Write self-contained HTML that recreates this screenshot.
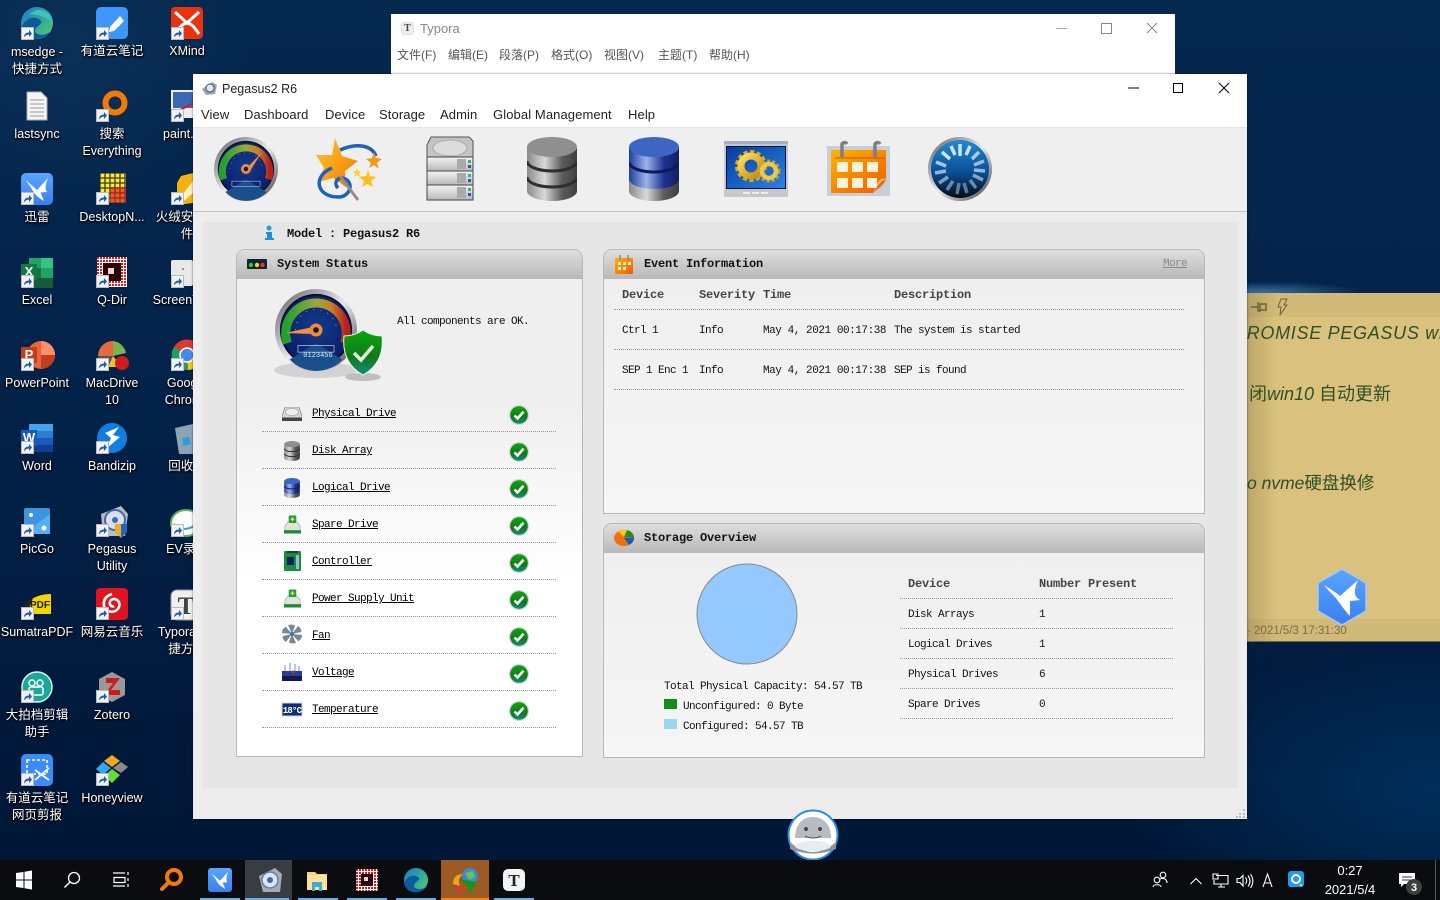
<!DOCTYPE html>
<html><head><meta charset="utf-8"><title>Pegasus2 R6</title>
<style>
*{box-sizing:border-box}
html,body{margin:0;padding:0;width:1440px;height:900px;overflow:hidden}
body{position:relative;background:
 radial-gradient(ellipse 130px 14px at 1265px 292px,rgba(110,180,235,.5),transparent 75%),
 radial-gradient(ellipse 420px 200px at 1440px 790px,rgba(0,70,125,.5),transparent 75%),
 radial-gradient(ellipse 240px 220px at 70px 50px,rgba(25,70,110,.3),transparent 75%),
 linear-gradient(180deg,#05284f 0%,#03234a 40%,#011b3e 75%,#001635 100%);
 font-family:"Liberation Sans","Noto Sans CJK SC",sans-serif}
.a{position:absolute;white-space:nowrap}
.d{position:absolute;width:80px;margin-top:1px;text-align:center;color:#fff;font-size:12.5px;line-height:17px;text-shadow:0 1px 2px #000,1px 1px 2px #000;white-space:nowrap}
svg{position:absolute;left:0;top:0;overflow:visible}
.win{position:absolute;background:#fff}
.m{font-size:13px;color:#222;line-height:16px;letter-spacing:.1px}
.tm{font-size:12px;color:#555;line-height:16px;top:47px}
.mono{font-family:"Liberation Mono","Noto Serif CJK SC",monospace;font-size:11px;letter-spacing:-.6px;line-height:14px;color:#111;transform:translateY(1px)}
.b{font-weight:bold;letter-spacing:-.2px;font-size:12px}
.h{font-weight:bold;color:#444;letter-spacing:-.2px;font-size:12px;transform:none}
.l{text-decoration:underline;color:#000}
.pn{position:absolute;border:1px solid #b8b8b8;border-top-left-radius:9px;border-top-right-radius:9px;background:linear-gradient(180deg,#eeeeee,#f6f6f6)}
.ph{position:absolute;left:0;right:0;top:0;height:29px;background:linear-gradient(180deg,#dedede,#b8b8b8);border-top-left-radius:8px;border-top-right-radius:8px}
.sep{position:absolute;height:1px;border-top:1px dotted #999}
.clk{color:#fff;font-size:13px;text-align:center;width:70px;line-height:16px}
</style></head><body>

<svg width="1440" height="900" viewBox="0 0 1440 900">
<defs>
<linearGradient id="s1" x1="0" y1="0" x2="1" y2="0"><stop offset="0" stop-color="#8a8a8a"/><stop offset=".35" stop-color="#d8d8d8"/><stop offset=".7" stop-color="#5c5c5c"/><stop offset="1" stop-color="#3f3f3f"/></linearGradient>
<linearGradient id="s2" x1="0" y1="0" x2="1" y2="0"><stop offset="0" stop-color="#1f3f9c"/><stop offset=".35" stop-color="#9db3e8"/><stop offset=".7" stop-color="#1d3291"/><stop offset="1" stop-color="#10205e"/></linearGradient>
<radialGradient id="gFace" cx=".5" cy=".45" r=".55"><stop offset="0" stop-color="#123a8d"/><stop offset="1" stop-color="#0a1f66"/></radialGradient>
<linearGradient id="gRim" x1="0" y1="0" x2="1" y2="1"><stop offset="0" stop-color="#5a5a60"/><stop offset=".5" stop-color="#e8e8ee"/><stop offset="1" stop-color="#3c3c44"/></linearGradient>
<linearGradient id="arc" x1="0" y1="0" x2="1" y2="0"><stop offset="0" stop-color="#22a030"/><stop offset=".5" stop-color="#9aa83a"/><stop offset=".75" stop-color="#c9802a"/><stop offset="1" stop-color="#b5201c"/></linearGradient>
<linearGradient id="ok" x1="0" y1="0" x2="0" y2="1"><stop offset="0" stop-color="#0ea60e"/><stop offset=".6" stop-color="#0f7a18"/><stop offset="1" stop-color="#0c8f78"/></linearGradient>
<linearGradient id="dial" x1="0" y1="0" x2="0" y2="1"><stop offset="0" stop-color="#1f8bd0"/><stop offset=".55" stop-color="#0b4f96"/><stop offset="1" stop-color="#020a18"/></linearGradient>
<linearGradient id="cal" x1="0" y1="0" x2="1" y2="1"><stop offset="0" stop-color="#ffb400"/><stop offset="1" stop-color="#f25a00"/></linearGradient>
<linearGradient id="mon" x1="0" y1="0" x2="1" y2="1"><stop offset="0" stop-color="#063c9c"/><stop offset="1" stop-color="#2a82e8"/></linearGradient>
<linearGradient id="edge" x1="0" y1="0" x2="1" y2="1"><stop offset="0" stop-color="#1a7cc8"/><stop offset="1" stop-color="#4fd06e"/></linearGradient>
<linearGradient id="xl" x1="0" y1="0" x2="0" y2="1"><stop offset="0" stop-color="#5aa5ff"/><stop offset="1" stop-color="#3b7ff0"/></linearGradient>
<linearGradient id="gear" x1="0" y1="0" x2="1" y2="1"><stop offset="0" stop-color="#ffe05a"/><stop offset="1" stop-color="#c08a10"/></linearGradient>
<linearGradient id="star" x1="0" y1="0" x2="1" y2="1"><stop offset="0" stop-color="#ffc830"/><stop offset="1" stop-color="#f07800"/></linearGradient>
<linearGradient id="hs" x1="0" y1="0" x2="0" y2="1"><stop offset="0" stop-color="#f4f4f4"/><stop offset="1" stop-color="#b8b8b8"/></linearGradient>
<pattern id="yel" width="5" height="5" patternUnits="userSpaceOnUse"><rect width="5" height="5" fill="#444"/><rect x=".7" y=".7" width="3.6" height="3.6" fill="#ffee22"/></pattern>
<pattern id="redg" width="3" height="3" patternUnits="userSpaceOnUse"><rect width="3" height="3" fill="#fff"/><rect width="2" height="2" fill="#d81c1c"/></pattern>
<symbol id="bdg" viewBox="0 0 13 13" overflow="visible"><rect x=".5" y=".5" width="12" height="12" fill="#f2f2f2" stroke="#bbb"/><path d="M3 10.5 C3 7 5 5.5 8 5.5 L8 3 L11 6.5 L8 10 L8 7.6 C6 7.6 4.5 8.3 3 10.5Z" fill="#1c5cb4"/></symbol>
<symbol id="bird" viewBox="0 0 32 32"><path d="M5 7 C10 12 14 15 16 17 L27 5 C24 12 24 17 26 19 L19.500 19.500 L23 28 C18 25 14 22 12 18 C10 14 7 11 5 7Z" fill="#fff"/></symbol>
<symbol id="gauge" viewBox="0 0 100 100">
<circle cx="50" cy="50" r="50" fill="url(#gRim)"/><circle cx="50" cy="50" r="44" fill="#0b0f30"/><circle cx="50" cy="50" r="41.500" fill="url(#gFace)"/>
<path d="M15 66 A37 37 0 1 1 85 66" fill="none" stroke="url(#arc)" stroke-width="11"/>
<path d="M25 50 A25 25 0 0 1 75 50" fill="none" stroke="#c8d8f0" stroke-width="1" stroke-dasharray="1 8"/>
<path d="M18 86 L50 66 L82 86 A44 44 0 0 1 18 86Z" fill="#1a4f8c"/>
<rect x="28" y="69" width="44" height="8" fill="none" stroke="#c8d8f0" stroke-width=".8"/>
</symbol>
<symbol id="okc" viewBox="0 0 20 20"><circle cx="10" cy="10" r="10" fill="#d4d4d4"/><circle cx="10" cy="10" r="8.800" fill="url(#ok)"/><path d="M5.500 10.500 L8.500 13.500 L14.500 6.800" fill="none" stroke="#fff" stroke-width="2.600"/></symbol>
<symbol id="hdd" viewBox="0 0 20 14"><path d="M3 0 H17 L20 9 V14 H0 V9Z" fill="#d5d5d5" stroke="#777" stroke-width=".6"/><ellipse cx="10" cy="5" rx="6.500" ry="3.500" fill="#eee" stroke="#999" stroke-width=".6"/><rect y="10.500" width="20" height="3.500" fill="#444"/></symbol>
<symbol id="db" viewBox="0 0 50 64"><path d="M0 10 V54 A25 10 0 0 0 50 54 V10Z" fill="url(#s1)"/><ellipse cx="25" cy="10" rx="25" ry="10" fill="#8f8f8f"/><path d="M0 24 A25 10 0 0 0 50 24 M0 40 A25 10 0 0 0 50 40" fill="none" stroke="#2e2e2e" stroke-width="3"/></symbol>
<symbol id="dbb" viewBox="0 0 50 64"><path d="M0 40 V54 A25 10 0 0 0 50 54 V40Z" fill="url(#s1)"/><path d="M0 10 V42 A25 10 0 0 0 50 42 V10Z" fill="url(#s2)"/><ellipse cx="25" cy="10" rx="25" ry="10" fill="#3c66c2"/><path d="M0 25 A25 10 0 0 0 50 25" fill="none" stroke="#0d1a5c" stroke-width="3"/></symbol>
<symbol id="spare" viewBox="0 0 20 20"><path d="M2 12 L5 8 H15 L18 12 V18 H2Z" fill="#e0e4dc" stroke="#7a8" stroke-width=".6"/><rect x="1" y="16.500" width="18" height="3.500" fill="#198a3a"/><rect x="6" y="1" width="8" height="8" rx="1" fill="#1e9c46"/><path d="M10 3 V7 M8 5 H12" stroke="#ffe94a" stroke-width="1.400"/></symbol>
</defs>

<!-- desktop icons -->
<g transform="translate(21,7)"><circle cx="16" cy="16" r="16" fill="url(#edge)"/><path d="M1 20 C4 10 16 8 20 14 C22 18 14 19 14 24 C14 28 24 30 30 24 C26 32 12 34 6 29 C3 27 1.500 24 1 20Z" fill="#0e5a9f"/><path d="M8 8 C16 -1 30 3 32 16 C27 10 14 6 8 8Z" fill="#3fc5b8"/></g>
<g transform="translate(96,7)"><rect width="32" height="32" rx="5" fill="#3d97fb"/><path d="M14 20 L24 9 L28 14 L18 24 L13 25Z" fill="#fff"/></g>
<g transform="translate(171,7)"><rect width="32" height="32" rx="4" fill="#e8330e"/><path d="M4 5 L16 16 L28 5 M4 27 C10 18 12 17 16 16 C20 17 22 18 28 27" fill="none" stroke="#fff" stroke-width="3"/></g>
<g transform="translate(26,92)"><path d="M1 0 H15 L21 6 V28 H1Z" fill="#f5f5f5" stroke="#aaa"/><path d="M4 8 H18 M4 12 H18 M4 16 H18 M4 20 H18 M4 24 H18" stroke="#999"/></g>
<g transform="translate(103,91)"><circle cx="12" cy="12" r="9.500" fill="none" stroke="#f27a05" stroke-width="6"/></g>
<g transform="translate(171,90)"><rect width="22" height="28" fill="#eee"/><rect x="2" y="2" width="22" height="16" fill="#3968b4"/><path d="M2 24 L24 12" stroke="#c22" stroke-width="2"/></g>
<g transform="translate(21,173)"><rect width="32" height="32" rx="5" fill="url(#xl)"/><use href="#bird" width="32" height="32"/></g>
<g transform="translate(100,173)"><rect width="26" height="30" fill="url(#yel)"/><rect x="10" y="14" width="16" height="16" fill="#d41818" opacity=".65"/></g>
<g transform="translate(173,173)"><path d="M8 3 L20 0 V30 L4 32 V10Z" fill="#f5b20e"/><path d="M9 22 L20 8 V20 L11 28Z" fill="#fff3c4"/></g>
<g transform="translate(21,258)"><rect x="8" width="24" height="30" fill="#1d7044"/><rect x="20" width="12" height="10" fill="#33c481"/><rect x="20" y="10" width="12" height="10" fill="#21a366"/><rect x="8" width="12" height="10" fill="#21a366"/><rect x="8" y="20" width="24" height="10" fill="#185c37"/><rect y="6" width="16" height="16" fill="#107c41"/><text x="8" y="18" font-size="13" font-weight="bold" fill="#fff" text-anchor="middle" font-family="Liberation Sans,sans-serif">X</text></g>
<g transform="translate(97,257)"><rect width="30" height="30" fill="url(#redg)"/><rect x="6" y="6" width="18" height="18" fill="#2a0505"/><rect x="11" y="11" width="6" height="6" fill="#f2d0d0"/></g>
<g transform="translate(171,260)"><rect width="22" height="26" rx="2" fill="#e8e8e8"/><circle cx="12" cy="9" r="1" fill="#777"/></g>
<g transform="translate(21,341)"><circle cx="20" cy="14" r="14" fill="#e8643c"/><path d="M20 0 A14 14 0 0 1 34 14 H20Z" fill="#ff8f6b"/><path d="M20 14 H34 A14 14 0 0 1 20 28Z" fill="#c43e1c"/><rect y="6" width="16" height="16" fill="#c43e1c"/><text x="8" y="18" font-size="13" font-weight="bold" fill="#fff" text-anchor="middle" font-family="Liberation Sans,sans-serif">P</text></g>
<g transform="translate(98,341)"><path d="M0 15 A15 15 0 0 1 15 0 L15 15Z" fill="#e36a42"/><path d="M15 0 A15 15 0 0 1 28 12 L15 15Z" fill="#7fb34a"/><path d="M0 15 H15 L10 28 A15 15 0 0 1 0 15Z" fill="#555"/><path d="M15 15 L24 26 H10Z" fill="#f0c030"/><circle cx="24" cy="22" r="7" fill="#d01c1c"/></g>
<g transform="translate(172,340)"><circle cx="15" cy="15" r="15" fill="#e23b2e"/><path d="M15 15 L2 7 A15 15 0 0 1 28 7Z" fill="#d83b2e"/><path d="M15 15 L28 7 A15 15 0 0 1 16 30Z" fill="#f5c518"/><path d="M15 15 L16 30 A15 15 0 0 1 2 7Z" fill="#1fa05a"/><circle cx="15" cy="15" r="7" fill="#4a86e8" stroke="#fff" stroke-width="1.500"/></g>
<g transform="translate(21,424)"><rect x="8" width="24" height="28" fill="#2b7cd3"/><rect x="8" width="24" height="7" fill="#41a5ee"/><rect x="8" y="14" width="24" height="7" fill="#185abd"/><rect x="8" y="21" width="24" height="7" fill="#103f91"/><rect y="6" width="16" height="16" fill="#185abd"/><text x="8" y="18" font-size="13" font-weight="bold" fill="#fff" text-anchor="middle" font-family="Liberation Sans,sans-serif">W</text></g>
<g transform="translate(97,423)"><circle cx="15" cy="15" r="15" fill="#0f7ee0"/><path d="M8 10 L22 4 L16 12 L23 14 L9 26 L14 15Z" fill="#fff"/></g>
<g transform="translate(174,424)"><path d="M1 4 L19 0 L22 4 L19 30 H5Z" fill="#8ea3b5"/><path d="M8 14 L15 13 L17 20 L9 22Z" fill="#28a0e0"/></g>
<g transform="translate(24,508)"><rect width="26" height="26" rx="2" fill="#3f94e0"/><path d="M0 26 L26 6 V26Z" fill="#56b0f0"/><circle cx="7" cy="7" r="2" fill="#fff"/><circle cx="20" cy="20" r="2.500" fill="#fff"/></g>
<g transform="translate(97,506)"><path d="M4 8 L24 0 L31 8 L28 30 L6 30Z" fill="#b9bcc1"/><circle cx="18" cy="14" r="10" fill="#dde" stroke="#3a6bb0" stroke-width="2"/><circle cx="18" cy="14" r="3" fill="#3a6bb0"/><path d="M18 18 L30 18 L30 26 L24 32 L18 26Z" fill="#f5a91c"/><path d="M24 18 H30 V26 L24 32Z" fill="#2166c4"/></g>
<g transform="translate(171,507)"><ellipse cx="15" cy="16" rx="15" ry="13" fill="#fff" stroke="#56b45e" stroke-width="2"/><path d="M3 17 C10 24 20 24 28 14" fill="none" stroke="#2ea6e0" stroke-width="2"/></g>
<g transform="translate(23,594)"><path d="M2 14 C4 4 18 0 28 0 V20 H8Z" fill="#f6d400"/><path d="M2 14 C3 8 6 5 10 4 L4 20Z" fill="#222"/><text x="17" y="14" font-size="10" font-weight="bold" fill="#222" text-anchor="middle" font-family="Liberation Sans,sans-serif">PDF</text></g>
<g transform="translate(96,588)"><rect width="32" height="32" rx="4" fill="#e0141f"/><path d="M16 6 C10 8 7 12 8 18 C10 25 20 26 23 19 C25 13 19 9 15 12 C12 15 15 20 18 18" fill="none" stroke="#fff" stroke-width="2.600"/></g>
<g transform="translate(171,590)"><rect width="28" height="30" rx="6" fill="#f0f0f0" stroke="#999"/><text x="15" y="24" font-family="Liberation Serif,serif" font-size="25" font-weight="bold" fill="#444" text-anchor="middle">T</text></g>
<g transform="translate(22,672)"><circle cx="15" cy="15" r="15" fill="#18a999" stroke="#dff5f2" stroke-width="1.500"/><circle cx="10" cy="11" r="3" fill="none" stroke="#fff" stroke-width="1.500"/><circle cx="18" cy="11" r="3" fill="none" stroke="#fff" stroke-width="1.500"/><rect x="7" y="15" width="14" height="8" rx="2" fill="none" stroke="#fff" stroke-width="1.500"/></g>
<g transform="translate(99,672)"><path d="M13 0 L26 7 V23 L13 30 L0 23 V7Z" fill="#999"/><path d="M7 6 H21 L12 18 H21 V23 H5 L14 11 H7Z" fill="#cb1b1b"/></g>
<g transform="translate(21,754)"><rect width="32" height="32" rx="5" fill="#3b8cfb"/><rect x="6" y="6" width="20" height="14" fill="none" stroke="#fff" stroke-dasharray="3 2" stroke-width="1.600"/><path d="M14 26 L28 14 M14 16 L28 26" stroke="#fff" stroke-width="1.800"/></g>
<g transform="translate(96,755)"><path d="M16 0 L24 6 L16 12 L8 6Z" fill="#f5a623"/><path d="M25 7 L32 12 L25 18 L17 13Z" fill="#8c8c8c"/><path d="M7 7 L15 13 L7 20 L0 14Z" fill="#2fa8f5"/><path d="M16 14 L24 20 L16 28 L8 21Z" fill="#66dd33"/></g>
<use href="#bdg" x="21" y="27" width="13" height="13"/><use href="#bdg" x="96" y="27" width="13" height="13"/><use href="#bdg" x="171" y="27" width="13" height="13"/>
<use href="#bdg" x="96" y="109" width="13" height="13"/><use href="#bdg" x="171" y="109" width="13" height="13"/>
<use href="#bdg" x="21" y="192" width="13" height="13"/><use href="#bdg" x="96" y="192" width="13" height="13"/><use href="#bdg" x="171" y="192" width="13" height="13"/>
<use href="#bdg" x="21" y="275" width="13" height="13"/><use href="#bdg" x="96" y="275" width="13" height="13"/><use href="#bdg" x="171" y="275" width="13" height="13"/>
<use href="#bdg" x="21" y="358" width="13" height="13"/><use href="#bdg" x="96" y="358" width="13" height="13"/><use href="#bdg" x="171" y="358" width="13" height="13"/>
<use href="#bdg" x="21" y="441" width="13" height="13"/><use href="#bdg" x="96" y="441" width="13" height="13"/>
<use href="#bdg" x="21" y="524" width="13" height="13"/><use href="#bdg" x="96" y="524" width="13" height="13"/><use href="#bdg" x="171" y="524" width="13" height="13"/>
<use href="#bdg" x="21" y="607" width="13" height="13"/><use href="#bdg" x="96" y="607" width="13" height="13"/><use href="#bdg" x="171" y="607" width="13" height="13"/>
<use href="#bdg" x="21" y="690" width="13" height="13"/><use href="#bdg" x="96" y="690" width="13" height="13"/>
<use href="#bdg" x="21" y="773" width="13" height="13"/><use href="#bdg" x="96" y="773" width="13" height="13"/>
</svg>

<div class="d" style="left:-3px;top:43px">msedge -<br>快捷方式</div>
<div class="d" style="left:72px;top:42px">有道云笔记</div>
<div class="d" style="left:147px;top:42px">XMind</div>
<div class="d" style="left:-3px;top:125px">lastsync</div>
<div class="d" style="left:72px;top:125px">搜索<br>Everything</div>
<div class="d" style="left:147px;top:125px">paint.net</div>
<div class="d" style="left:-3px;top:208px">迅雷</div>
<div class="d" style="left:72px;top:208px">DesktopN...</div>
<div class="d" style="left:147px;top:208px">火绒安全软<br>件</div>
<div class="d" style="left:-3px;top:291px">Excel</div>
<div class="d" style="left:72px;top:291px">Q-Dir</div>
<div class="d" style="left:147px;top:291px">ScreenToGif</div>
<div class="d" style="left:-3px;top:374px">PowerPoint</div>
<div class="d" style="left:72px;top:374px">MacDrive<br>10</div>
<div class="d" style="left:147px;top:374px">Google<br>Chrome</div>
<div class="d" style="left:-3px;top:457px">Word</div>
<div class="d" style="left:72px;top:457px">Bandizip</div>
<div class="d" style="left:147px;top:457px">回收站</div>
<div class="d" style="left:-3px;top:540px">PicGo</div>
<div class="d" style="left:72px;top:540px">Pegasus<br>Utility</div>
<div class="d" style="left:147px;top:540px">EV录屏</div>
<div class="d" style="left:-3px;top:623px">SumatraPDF</div>
<div class="d" style="left:72px;top:623px">网易云音乐</div>
<div class="d" style="left:147px;top:623px">Typora -快<br>捷方式</div>
<div class="d" style="left:-3px;top:706px">大拍档剪辑<br>助手</div>
<div class="d" style="left:72px;top:706px">Zotero</div>
<div class="d" style="left:-3px;top:789px">有道云笔记<br>网页剪报</div>
<div class="d" style="left:72px;top:789px">Honeyview</div>

<!-- sticky note -->
<div class="win" style="left:1240px;top:293px;width:200px;height:349px;background:#dac27e;overflow:hidden;border-bottom:1px solid #6c6650">
 <div class="a" style="left:0;top:0;width:200px;height:24px;background:#d1b978"></div>
 <div class="a" style="left:0;bottom:0;width:200px;height:22px;background:#d1b978"></div>
 <div class="a" style="left:7px;top:0;width:30px;height:349px;background:linear-gradient(90deg,rgba(130,110,60,.35),transparent)"></div>
 <svg width="200" height="349"><path d="M11 14 H18 M18 9 V18 H20 V11 H26 V17 H20" fill="none" stroke="#6a6238" stroke-width="1.500"/><path d="M41 6 L47 6 L44 12 L47 12 L40 22 L41 14 L38 14Z" fill="none" stroke="#6a6238"/></svg>
 <div class="a" style="left:-6px;top:30px;font-size:18px;font-style:italic;color:#2f4f26;letter-spacing:.7px;font-family:'Liberation Sans',sans-serif">PROMISE PEGASUS win10</div>
 <div class="a" style="left:9px;top:89px;font-size:18px;color:#2f4f26;line-height:24px;font-family:'Liberation Sans','Noto Sans CJK SC',sans-serif">闭<i>win10</i> 自动更新</div>
 <div class="a" style="left:7px;top:178px;font-size:17.500px;color:#2f4f26;line-height:24px;font-family:'Liberation Sans','Noto Sans CJK SC',sans-serif"><i>o nvme</i>硬盘换修</div>
 <div class="a" style="left:7px;top:331px;font-size:11.500px;color:#7c6c48;line-height:14px">- 2021/5/3 17:31:30</div>
</div>

<!-- typora window -->
<div class="win" style="left:391px;top:14px;width:784px;height:60px">
 <div class="a" style="left:10px;top:8px;width:13px;height:13px;background:#eee;border-radius:3px;border:1px solid #ddd;font:bold 10px 'Liberation Serif',serif;text-align:center;line-height:11px;color:#444">T</div>
 <div class="a" style="left:29px;top:7px;font-size:13px;color:#888;line-height:16px">Typora</div>
 <div class="a tm" style="left:6px;top:33px">文件(F)</div><div class="a tm" style="left:57px;top:33px">编辑(E)</div><div class="a tm" style="left:108px;top:33px">段落(P)</div><div class="a tm" style="left:160px;top:33px">格式(O)</div><div class="a tm" style="left:213px;top:33px">视图(V)</div><div class="a tm" style="left:267px;top:33px">主题(T)</div><div class="a tm" style="left:318px;top:33px">帮助(H)</div>
 <svg width="784" height="60"><path d="M665 14.500 H676" stroke="#aaa"/><rect x="710.500" y="9.500" width="10" height="10" fill="none" stroke="#888"/><path d="M756 9 L766 19 M766 9 L756 19" stroke="#888"/></svg>
</div>

<!-- main window -->
<div class="win" style="left:193px;top:74px;width:1054px;height:745px;background:#ededed;box-shadow:0 0 2px rgba(0,0,0,.6)">
 <div class="a" style="left:0;top:0;width:1054px;height:53px;background:#fff"></div>
 <div class="a" style="left:0;top:53px;width:1054px;height:85px;background:#efefef;border-top:1px solid #e4e4e4;border-bottom:1px solid #c4c4c4"></div>
 <div class="a" style="left:29px;top:7px;font-size:12.500px;color:#222;line-height:16px">Pegasus2 R6</div>
 <div class="a m" style="left:8px;top:33px">View</div><div class="a m" style="left:51px;top:33px">Dashboard</div><div class="a m" style="left:132px;top:33px">Device</div><div class="a m" style="left:186px;top:33px">Storage</div><div class="a m" style="left:247px;top:33px">Admin</div><div class="a m" style="left:300px;top:33px">Global Management</div><div class="a m" style="left:435px;top:33px">Help</div>
 <div class="a" style="left:10px;top:148px;width:1035px;height:566px;background:#e6e6e6"></div>
</div>

<svg width="1440" height="900" style="pointer-events:none">
<!-- title icon -->
<g transform="translate(201,81)"><path d="M1 8 L11 1 L16 4 L14 13 L5 14Z" fill="#9aa2aa"/><circle cx="9" cy="7" r="4" fill="#dfe8f3" stroke="#456"/></g>
<path d="M1128 88 H1139" stroke="#000"/><rect x="1173.500" y="83.500" width="9" height="9" fill="none" stroke="#000"/><path d="M1219 83 L1229 93 M1229 83 L1219 93" stroke="#000"/>

<!-- toolbar -->
<use href="#gauge" x="214" y="137" width="64" height="64"/>
<path d="M246 169 L262 152 L250 171Z" fill="#f59042"/><circle cx="246" cy="169" r="5" fill="#f28a38"/><circle cx="246" cy="169" r="2.200" fill="#111"/>
<g>
<path d="M335 138 L342 156 L358 161 L345 171 L346 187 L333 178 L318 182 L324 168 L316 155 L332 155Z" fill="url(#star)"/>
<path d="M340 150 C358 142 372 146 376 156 M332 168 C312 176 316 198 340 197 C352 195 354 180 342 178 C336 178 334 184 338 188" fill="none" stroke="#1e5fc0" stroke-width="3.500"/>
<path d="M340 176 L358 200" stroke="#9a8a80" stroke-width="3"/>
<path d="M374 152 L376 158 L382 159 L377 163 L379 169 L374 165 L369 168 L371 163 L366 159 L372 158Z" fill="#f29a18"/>
<path d="M368 170 L370 176 L376 177 L371 181 L373 187 L367 184 L362 187 L364 181 L359 177 L366 176Z" fill="#ffc01e"/>
<path d="M357 168 L358 171 L361 171 L359 174 L360 177 L357 175 L354 177 L355 174 L353 171 L356 171Z" fill="#ffd030"/>
</g>
<g transform="translate(427,137)"><path d="M4 0 H42 L46 4 V24 H0 V8Z" fill="#c4c4c4" stroke="#555"/><ellipse cx="23" cy="11" rx="17" ry="8" fill="#dcdcdc" stroke="#aaa"/>
<g stroke="#444" fill="url(#hs)"><rect x="0" y="20" width="46" height="14"/><rect x="0" y="34" width="46" height="14"/><rect x="0" y="48" width="46" height="15"/></g>
<g fill="#aaa"><rect x="30" y="22" width="9" height="10"/><rect x="30" y="36" width="9" height="10"/><rect x="30" y="50" width="9" height="11"/></g>
<g fill="#2b6"><rect x="41" y="23" width="3" height="3"/><rect x="41" y="37" width="3" height="3"/><rect x="41" y="51" width="3" height="3"/></g>
<g fill="#25c"><rect x="41" y="28" width="3" height="3"/><rect x="41" y="42" width="3" height="3"/><rect x="41" y="56" width="3" height="3"/></g></g>
<use href="#db" x="527" y="137" width="50" height="64"/>
<use href="#dbb" x="629" y="137" width="50" height="64"/>
<g transform="translate(724,141)"><rect width="64" height="56" fill="#c4c8cc"/><rect y="0" width="64" height="3" fill="#a5adbe"/><rect x="2" y="5" width="60" height="43" fill="#05143a"/><rect x="3" y="6" width="58" height="41" fill="url(#mon)"/>
<circle cx="27" cy="25" r="14" fill="none" stroke="#e0a818" stroke-width="4" stroke-dasharray="4 2.500"/><circle cx="27" cy="25" r="10" fill="none" stroke="url(#gear)" stroke-width="7"/>
<circle cx="45" cy="30" r="10" fill="none" stroke="#c8a028" stroke-width="3" stroke-dasharray="3 2"/><circle cx="45" cy="30" r="7" fill="none" stroke="#e8c850" stroke-width="4.500"/>
<g fill="#eee"><rect x="19" y="51" width="7" height="2"/><rect x="28" y="51" width="7" height="2"/><rect x="37" y="51" width="7" height="2"/></g></g>
<g transform="translate(827,141)"><rect y="5" width="63" height="50" fill="#c8ced8"/><path d="M4 9 H59 V38 C56 46 50 48 46 52 H4Z" fill="url(#cal)"/><path d="M46 52 C50 44 54 40 59 38 C54 36 50 40 46 52Z" fill="#f2c090"/>
<path d="M15 16 V3 A3 3 0 0 1 20 3 M48 16 V3 A3 3 0 0 1 53 3" stroke="#77808c" stroke-width="3.500" fill="none"/><path d="M8 17 H58" stroke="#b85a00"/>
<g fill="#fdf0dc"><rect x="10" y="21" width="11" height="10"/><rect x="25" y="21" width="11" height="10"/><rect x="40" y="21" width="11" height="10"/><rect x="10" y="37" width="11" height="10"/><rect x="25" y="37" width="11" height="10"/><rect x="40" y="37" width="10" height="10"/></g></g>
<g transform="translate(960,169)"><circle r="32" fill="url(#gRim)"/><circle r="29" fill="url(#dial)"/>
<g stroke="#cfe3f5" stroke-width="3.500"><path d="M0 -25 V-13"/><path d="M10 -23 L6 -14" /><path d="M19 -17 L12 -10" opacity=".8"/><path d="M24 -8 L14 -4" opacity=".7"/><path d="M25 2 L14 1" opacity=".7"/><path d="M23 11 L13 6" opacity=".6"/><path d="M16 19 L10 11" opacity=".5"/><path d="M7 24 L4 14" opacity=".45"/><path d="M-3 25 L-1 14" opacity=".45"/><path d="M-13 21 L-7 12" opacity=".5"/><path d="M-21 14 L-12 8" opacity=".6"/><path d="M-25 4 L-14 2" opacity=".7"/><path d="M-24 -7 L-14 -3" opacity=".8"/><path d="M-18 -17 L-10 -10"/><path d="M-9 -23 L-5 -14"/></g></g>
</svg>

<!-- status text & panels -->
<div class="a mono b" style="left:287px;top:226px">Model : Pegasus2 R6</div>

<div class="pn" style="left:236px;top:249px;width:347px;height:508px;background:linear-gradient(180deg,#efefef 0,#efefef 30%,#ffffff 65%,#ffffff 100%)"><div class="ph"></div></div>
<div class="pn" style="left:603px;top:249px;width:602px;height:265px"><div class="ph"></div></div>
<div class="pn" style="left:603px;top:523px;width:602px;height:235px"><div class="ph"></div></div>

<div class="a mono b" style="left:277px;top:256px">System Status</div>
<div class="a mono" style="left:397px;top:314px">All components are OK.</div>
<div class="a mono l" style="left:312px;top:406px">Physical Drive</div>
<div class="a mono l" style="left:312px;top:443px">Disk Array</div>
<div class="a mono l" style="left:312px;top:480px">Logical Drive</div>
<div class="a mono l" style="left:312px;top:517px">Spare Drive</div>
<div class="a mono l" style="left:312px;top:554px">Controller</div>
<div class="a mono l" style="left:312px;top:591px">Power Supply Unit</div>
<div class="a mono l" style="left:312px;top:628px">Fan</div>
<div class="a mono l" style="left:312px;top:665px">Voltage</div>
<div class="a mono l" style="left:312px;top:702px">Temperature</div>
<div class="sep" style="left:262px;top:431px;width:294px"></div><div class="sep" style="left:262px;top:468px;width:294px"></div><div class="sep" style="left:262px;top:505px;width:294px"></div><div class="sep" style="left:262px;top:542px;width:294px"></div><div class="sep" style="left:262px;top:579px;width:294px"></div><div class="sep" style="left:262px;top:616px;width:294px"></div><div class="sep" style="left:262px;top:653px;width:294px"></div><div class="sep" style="left:262px;top:690px;width:294px"></div><div class="sep" style="left:262px;top:727px;width:294px"></div>

<div class="a mono b" style="left:644px;top:256px">Event Information</div>
<div class="a mono" style="left:1163px;top:256px;color:#8a8a8a;text-decoration:underline">More</div>
<div class="a mono h" style="left:622px;top:288px">Device</div><div class="a mono h" style="left:699px;top:288px">Severity</div><div class="a mono h" style="left:763px;top:288px">Time</div><div class="a mono h" style="left:894px;top:288px">Description</div>
<div class="sep" style="left:614px;top:309px;width:570px"></div><div class="sep" style="left:614px;top:349px;width:570px"></div><div class="sep" style="left:614px;top:389px;width:570px"></div>
<div class="a mono" style="left:622px;top:323px">Ctrl 1</div><div class="a mono" style="left:699px;top:323px">Info</div><div class="a mono" style="left:763px;top:323px;letter-spacing:-.45px">May 4, 2021 00:17:38</div><div class="a mono" style="left:894px;top:323px">The system is started</div>
<div class="a mono" style="left:622px;top:363px">SEP 1 Enc 1</div><div class="a mono" style="left:699px;top:363px">Info</div><div class="a mono" style="left:763px;top:363px;letter-spacing:-.45px">May 4, 2021 00:17:38</div><div class="a mono" style="left:894px;top:363px">SEP is found</div>

<div class="a mono b" style="left:644px;top:530px">Storage Overview</div>
<div class="a mono" style="left:664px;top:679px">Total Physical Capacity: 54.57 TB</div>
<div class="a mono" style="left:683px;top:699px">Unconfigured: 0 Byte</div>
<div class="a mono" style="left:683px;top:719px">Configured: 54.57 TB</div>
<div class="a" style="left:664px;top:699px;width:13px;height:10px;background:#128c1c"></div>
<div class="a" style="left:664px;top:719px;width:13px;height:10px;background:#98d7ef"></div>
<div class="a mono h" style="left:908px;top:577px">Device</div><div class="a mono h" style="left:1039px;top:577px">Number Present</div>
<div class="a mono" style="left:908px;top:607px">Disk Arrays</div><div class="a mono" style="left:1039px;top:607px">1</div>
<div class="a mono" style="left:908px;top:637px">Logical Drives</div><div class="a mono" style="left:1039px;top:637px">1</div>
<div class="a mono" style="left:908px;top:667px">Physical Drives</div><div class="a mono" style="left:1039px;top:667px">6</div>
<div class="a mono" style="left:908px;top:697px">Spare Drives</div><div class="a mono" style="left:1039px;top:697px">0</div>
<div class="sep" style="left:900px;top:598px;width:273px"></div><div class="sep" style="left:900px;top:628px;width:273px"></div><div class="sep" style="left:900px;top:658px;width:273px"></div><div class="sep" style="left:900px;top:688px;width:273px"></div><div class="sep" style="left:900px;top:718px;width:273px"></div>

<svg width="1440" height="900">
<!-- info icon -->
<circle cx="269" cy="228" r="2.500" fill="#1aa0e8"/><path d="M266 232 H272 V238 H274 V240 H265 V238 H267 V234 H266Z" fill="#1a90e0"/>
<!-- traffic -->
<rect x="247" y="259" width="20" height="10" rx="1" fill="#123"/><circle cx="251" cy="265" r="2.200" fill="#3c3"/><circle cx="257" cy="265" r="2.200" fill="#fc3"/><circle cx="262.500" cy="265" r="2.200" fill="#e33"/>
<!-- big gauge -->
<ellipse cx="316" cy="370" rx="42" ry="8" fill="#000" opacity=".12"/><ellipse cx="363" cy="377" rx="18" ry="4" fill="#000" opacity=".2"/>
<use href="#gauge" x="275" y="289" width="82" height="82"/>
<path d="M285 333 L313 327 L313 334Z" fill="#f59042"/><circle cx="316" cy="330" r="6.500" fill="#f28a38"/><circle cx="316" cy="330" r="2.800" fill="#111"/>
<text x="318" y="357" font-family="Liberation Mono,monospace" font-size="7" fill="#dbe6f4" text-anchor="middle">0123456</text>
<path d="M363 330 C370 335 376 336 382 336 C384 355 376 368 363 375 C350 368 342 355 344 336 C350 336 356 335 363 330Z" fill="url(#ok)" stroke="#e8f5e8"/>
<path d="M354 353 L361 360 L373 346" fill="none" stroke="#dff3df" stroke-width="3.500"/>
<!-- checks -->
<use href="#okc" x="509" y="405" width="20" height="20"/><use href="#okc" x="509" y="442" width="20" height="20"/><use href="#okc" x="509" y="479" width="20" height="20"/><use href="#okc" x="509" y="516" width="20" height="20"/><use href="#okc" x="509" y="553" width="20" height="20"/><use href="#okc" x="509" y="590" width="20" height="20"/><use href="#okc" x="509" y="627" width="20" height="20"/><use href="#okc" x="509" y="664" width="20" height="20"/><use href="#okc" x="509" y="701" width="20" height="20"/>
<!-- list icons -->
<use href="#hdd" x="282" y="407" width="20" height="14"/>
<use href="#db" x="284" y="441" width="16" height="20"/>
<use href="#dbb" x="284" y="478" width="16" height="20"/>
<use href="#spare" x="283" y="514" width="19" height="20"/>
<g transform="translate(284,551)"><rect width="17" height="20" rx="1" fill="#1c8a44"/><rect x="3" y="6" width="7" height="8" fill="#0a2454"/><rect x="12" y="4" width="3" height="14" fill="#9bc"/><rect x="3" width="11" height="2" fill="#0a4d24"/></g>
<use href="#spare" x="283" y="588" width="19" height="20"/>
<g transform="translate(292,634)" fill="#7c8890"><path d="M0 0 L-4 -9 C0 -10 3 -9 3 -8Z"/><path d="M0 0 L6 -8 C9 -6 10 -3 9 -2Z"/><path d="M0 0 L10 1 C10 4 8 7 6 7Z"/><path d="M0 0 L4 9 C0 10 -3 9 -3 8Z"/><path d="M0 0 L-6 8 C-9 6 -10 3 -9 2Z"/><path d="M0 0 L-10 -1 C-10 -4 -8 -7 -6 -7Z"/><circle r="2" fill="#2a7ac0"/></g>
<g transform="translate(282,663)"><rect y="8" width="20" height="10" fill="#2a3f94"/><rect y="13" width="20" height="5" fill="#0e1b50"/><path d="M3 8 V2 M8 8 V0 M13 8 V1 M17 8 V3" stroke="#6f8fd8"/><circle cx="11" cy="9" r="1.500" fill="#d22"/></g>
<g transform="translate(282,703)"><rect width="20" height="13" fill="#0d3070" stroke="#cdd5e0"/><text x="10" y="10" font-family="Liberation Mono,monospace" font-weight="bold" font-size="9" letter-spacing="-.8" fill="#fff" text-anchor="middle">18°C</text></g>
<!-- panel icons -->
<g transform="translate(615,255)"><rect y="3" width="18" height="16" rx="1" fill="url(#cal)"/><g fill="#fdf0dc"><rect x="3" y="7" width="3" height="3"/><rect x="8" y="7" width="3" height="3"/><rect x="13" y="7" width="3" height="3"/><rect x="3" y="12" width="3" height="3"/><rect x="8" y="12" width="3" height="3"/></g><path d="M5 5 V0 M13 5 V0" stroke="#889" stroke-width="1.500"/></g>
<g transform="translate(624,538)"><ellipse rx="10" ry="8" fill="#f07010"/><path d="M0 -1 L3 -8 A10 8 0 0 1 10 0Z" fill="#2a8a2a"/><path d="M0 0 L10 0 A10 8 0 0 1 5 7Z" fill="#1c5cb8"/><path d="M0 -1 L-6 -7 A10 8 0 0 1 3 -8Z" fill="#f8c818"/></g>
<!-- pie -->
<circle cx="747" cy="614" r="50" fill="#94c9ff" stroke="#888" stroke-width="1"/>
<!-- grip -->
<g fill="#bbb"><rect x="1243" y="809" width="2" height="2"/><rect x="1243" y="813" width="2" height="2"/><rect x="1239" y="813" width="2" height="2"/><rect x="1243" y="816" width="2" height="2"/><rect x="1239" y="816" width="2" height="2"/><rect x="1236" y="816" width="2" height="2"/></g>
<!-- sticky hex -->
<path d="M1342 569 L1366 583 V611 L1342 625 L1318 611 V583Z" fill="url(#xl)" stroke="#a8c8f5" stroke-width="1.500"/>
<path d="M1324 585 C1332 590 1338 594 1340 596 L1358 580 C1354 590 1353 596 1360 600 L1350 601 L1350 616 C1344 610 1338 600 1334 596 C1330 592 1328 590 1324 585Z" fill="#fff"/>
<!-- avatar -->
<circle cx="813" cy="835" r="24.500" fill="#fff" stroke="#2f8ae0" stroke-width="2"/>
<path d="M795 838 C795 824 803 817 813 817 C823 817 831 824 831 838 Z" fill="#b8bcc2"/>
<path d="M790 842 Q813 862 836 842 L836 849 Q813 858 790 849Z" fill="#8f939a"/><ellipse cx="813" cy="846" rx="18" ry="5" fill="#e8ecf0"/>
<circle cx="806" cy="829" r="2" fill="#444"/><circle cx="820" cy="829" r="2" fill="#444"/><path d="M805 836 Q813 840 821 836" stroke="#555" fill="none"/>
</svg>

<!-- taskbar -->
<div class="a" style="left:0;top:860px;width:1440px;height:40px;background:#0a0c10"></div>
<div class="a" style="left:245px;top:860px;width:47px;height:40px;background:#393c42"></div>
<div class="a" style="left:441px;top:860px;width:48px;height:40px;background:#9c5a24"></div>
<div class="a" style="left:200px;top:898px;width:40px;height:2px;background:#69aede"></div>
<div class="a" style="left:245px;top:898px;width:44px;height:2px;background:#69aede"></div>
<div class="a" style="left:298px;top:898px;width:40px;height:2px;background:#69aede"></div>
<div class="a" style="left:347px;top:898px;width:40px;height:2px;background:#69aede"></div>
<div class="a" style="left:396px;top:898px;width:40px;height:2px;background:#69aede"></div>
<div class="a" style="left:441px;top:898px;width:48px;height:2px;background:#f5841e"></div>
<div class="a" style="left:494px;top:898px;width:40px;height:2px;background:#69aede"></div>

<svg width="1440" height="900">
<path d="M16 873 L23.500 872 V879.500 H16Z M24.500 871.800 L32 870.500 V879.500 H24.500Z M16 880.500 H23.500 V888 L16 887Z M24.500 880.500 H32 V889.500 L24.500 888.200Z" fill="#fff"/>
<circle cx="74" cy="878" r="5.500" fill="none" stroke="#fff" stroke-width="1.300"/><path d="M70 882 L64.500 887.500" stroke="#fff" stroke-width="1.500"/>
<path d="M113 873 H125 M113 886 H125 M114 877.500 H125 V882.500 H114Z M128 872 V875 M128 878 V881 M128 884 V887" fill="none" stroke="#fff" stroke-width="1.200"/>
<circle cx="174" cy="877" r="7" fill="none" stroke="#f27a05" stroke-width="4"/><path d="M168 883 L162 889" stroke="#f27a05" stroke-width="4" stroke-linecap="round"/>
<rect x="208" y="868" width="24" height="24" rx="3" fill="url(#xl)"/><use href="#bird" x="208" y="868" width="24" height="24"/>
<g transform="translate(257,868)"><path d="M2 8 L18 0 L25 6 L23 24 L6 24Z" fill="#a8acb2"/><circle cx="13" cy="12" r="8" fill="#e0e6f0" stroke="#5a7fb8" stroke-width="1.500"/><circle cx="13" cy="12" r="3" fill="#3a6bb0"/></g>
<g transform="translate(307,870)"><path d="M0 2 H8 L10 4 H20 V20 H0Z" fill="#f5d67c"/><rect y="5" width="20" height="15" fill="#fbe29a"/><path d="M5 12 H15 V21 H12 V17 H8 V21 H5Z" fill="#45a8dc"/></g>
<g transform="translate(356,869)"><rect width="22" height="22" fill="url(#redg)"/><rect x="5" y="5" width="12" height="12" fill="#2a0505"/><rect x="8" y="8" width="4" height="4" fill="#f2d0d0"/></g>
<g transform="translate(404,868)"><circle cx="12" cy="12" r="12" fill="url(#edge)"/><path d="M0 15 C3 7 12 6 15 10 C16 13 10 14 10 18 C10 21 18 23 23 18 C19 25 9 26 4 22 C2 20 .5 18 0 15Z" fill="#0e5a9f"/></g>
<g transform="translate(453,867)"><circle cx="17" cy="9" r="8" fill="#3b8ad8"/><path d="M12 6 L20 4 L22 10 L16 13Z" fill="#6cc05a"/><path d="M0 17 C0 9 5 7 10 7 C6 10 5 14 7 19Z" fill="#f0a020"/><path d="M2 20 C4 24 8 25 12 24 L10 21 C8 21 6 20 5 18Z" fill="#d63a2a"/><path d="M7 12 L24 15 L17 27 L15 20Z" fill="#16931e"/></g>
<g transform="translate(503,869)"><rect width="22" height="22" rx="5" fill="#f5f5f5"/><text x="11" y="17" font-family="Liberation Serif,serif" font-size="17" font-weight="bold" fill="#222" text-anchor="middle">T</text></g>

<!-- tray -->
<g fill="none" stroke="#fff" stroke-width="1.100"><circle cx="1163" cy="875" r="2.800"/><circle cx="1157" cy="880" r="2.800"/><path d="M1153 887 C1153 884 1161 884 1161 887 M1160 879 C1162 878 1167 878 1167 883"/>
<path d="M1190.500 884 L1196 878.500 L1201.500 884"/>
<path d="M1216 875.500 H1228 V884 H1214 V880 M1221 884 V887 M1218 887 H1225 M1213 874 H1218 V879 H1213Z"/>
<path d="M1237 878.500 H1240 L1243 875.500 V886 L1240 882.500 H1237Z M1245.500 877.500 C1247 879.500 1247 882 1245.500 884 M1248 875.500 C1250.500 879 1250.500 883 1248 886.500 M1250.500 874 C1253.500 878.500 1253.500 883.500 1250.500 888"/>
<path d="M1263 887 L1267.500 874 L1272 887 M1264.500 883 H1270.500"/></g>
<rect x="1288" y="871" width="16" height="16" rx="3" fill="#1f9bf0"/><circle cx="1296" cy="879" r="4" fill="none" stroke="#fff" stroke-width="2"/><circle cx="1301" cy="885" r="1.300" fill="#aee04a"/>
<path d="M1399 873 H1415 V884 H1404 L1401 887 V884 H1399Z" fill="#fff"/><path d="M1402 877 H1412 M1402 880 H1412" stroke="#333"/>
<circle cx="1414" cy="887" r="8" fill="#3f3f3f"/><text x="1414" y="891" font-family="Liberation Sans,sans-serif" font-size="11" font-weight="bold" fill="#fff" text-anchor="middle">3</text>
<path d="M1435.500 860 V900" stroke="#555"/>
</svg>
<div class="a clk" style="left:1315px;top:863px">0:27</div>
<div class="a clk" style="left:1315px;top:882px">2021/5/4</div>
</body></html>
